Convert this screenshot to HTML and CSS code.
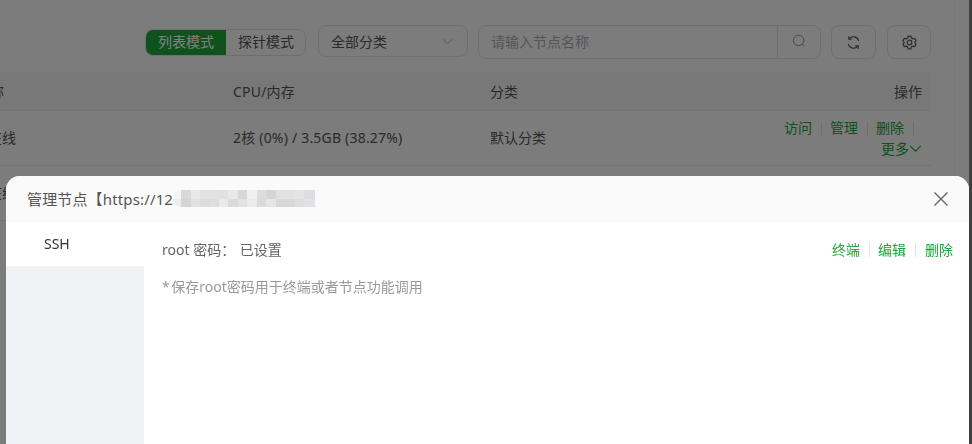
FILE: index.html
```html
<!DOCTYPE html>
<html lang="en">
<head>
  <meta charset="UTF-8" />
  <title>节点管理</title>
  <link rel="stylesheet" href="styles.css">
</head>
<body>
  <!-- Node list behind the mask -->
  <main class="page">
    <div class="toolbar">
      <div class="mode-switch">
        <span class="mode mode-active">列表模式</span>
        <span class="mode">探针模式</span>
      </div>
      <div class="select">
        <span>全部分类</span>
        <svg class="select-arrow" viewBox="0 0 12 12"><path d="M1 3.5 6 8.5 11 3.5" /></svg>
      </div>
      <div class="search">
        <span class="search-input">请输入节点名称</span>
        <span class="search-btn">
          <svg viewBox="0 0 16 16"><circle cx="7.5" cy="7.3" r="6" /><path d="M11.8 11.6 14.4 14.2" /></svg>
        </span>
      </div>
      <span class="icon-btn">
        <svg viewBox="0 0 16 16"><path d="M13.6 6.2A5.8 5.8 0 0 0 3.4 4.2M2.4 9.8a5.8 5.8 0 0 0 10.2 2" /><path d="M3 1.2v3.2h3.2M13 14.8v-3.2H9.8" /></svg>
      </span>
      <span class="icon-btn">
        <svg viewBox="0 0 16 16"><path d="M6.6 1.2h2.8l.6 2 1.6.9 2-.5 1.4 2.4L13.6 8l1.4 2-1.4 2.4-2-.5-1.6.9-.6 2H6.6l-.6-2-1.6-.9-2 .5L1 10l1.4-2L1 6l1.4-2.4 2 .5L6 3.2z" /><circle cx="8" cy="8" r="2.5" /></svg>
      </span>
    </div>
    <div class="table">
      <div class="row row-head">
        <span class="cell-name">名称</span>
        <span class="cell-cpu">CPU/内存</span>
        <span class="cell-cat">分类</span>
        <span class="cell-op">操作</span>
      </div>
      <div class="row row-body">
        <span class="cell-name">在线</span>
        <span class="cell-cpu">2核 (0%) / 3.5GB (38.27%)</span>
        <span class="cell-cat">默认分类</span>
        <div class="cell-op links">
          <div><a>访问</a><i></i><a>管理</a><i></i><a>删除</a><i></i></div>
          <div class="more">更多<svg viewBox="0 0 12 12"><path d="M1 3.5 6 8.5 11 3.5" /></svg></div>
        </div>
      </div>
      <div class="row row-body">
        <span class="cell-name">在线</span>
      </div>
    </div>
  </main>
  <div class="page-edge"></div>

  <div class="mask"></div>

  <!-- Manage node drawer -->
  <section class="drawer">
    <header class="drawer-head">
      <span class="drawer-title">管理节点【https://12</span>
      <span class="mosaic"></span>
      <svg class="close" viewBox="0 0 16 16"><path d="M1.5 1.5 14.5 14.5M14.5 1.5 1.5 14.5" /></svg>
    </header>
    <div class="drawer-body">
      <aside class="tabs">
        <div class="tab">SSH</div>
      </aside>
      <div class="panel">
        <div class="panel-row">
          <span>root 密码： <span class="value">已设置</span></span>
          <div class="actions"><a>终端</a><i></i><a>编辑</a><i></i><a>删除</a></div>
        </div>
        <p class="hint">* 保存root密码用于终端或者节点功能调用</p>
      </div>
    </div>
  </section>
</body>
</html>
```

FILE: styles.css
```css
* {
  margin: 0;
  padding: 0;
  box-sizing: border-box;
}
html, body {
  height: 100%;
}
body {
  font-family: "Noto Sans", "Noto Sans CJK SC", sans-serif;
  font-size: 14px;
  color: #555;
  background-color: #f8f8f8;
  overflow: hidden;
}
svg {
  fill: none;
  stroke: currentColor;
  display: block;
}

/* Page behind the mask */
.page {
  width: 958px;
  height: 100%;
  padding: 25px 26px 0 0;
  border-right: 1px solid #fff;
}
.toolbar {
  display: flex;
  align-items: flex-start;
  justify-content: flex-end;
  height: 34px;
}
.mode-switch {
  display: flex;
  height: 27px;
  margin: 4px 12px 0 0;
  border: 1px solid #dcdfe6;
  border-radius: 8px;
  overflow: hidden;
}
.mode {
  width: 79px;
  padding-left: 1px;
  line-height: 24px;
  text-align: center;
}
.mode-active {
  width: 81px;
  margin: -1px 0 -1px -1px;
  padding-top: 1px;
  background-color: #20a53a;
  color: #fff;
}
.select {
  display: flex;
  align-items: center;
  justify-content: space-between;
  width: 150px;
  height: 32px;
  margin-right: 10px;
  padding: 0 14px 0 12px;
  border: 1px solid #dcdfe6;
  border-radius: 8px;
}
.select-arrow {
  width: 11px;
  height: 11px;
  color: #aaa;
}
.search {
  display: flex;
  width: 343px;
  height: 34px;
  margin-right: 10px;
  border: 1px solid #dcdfe6;
  border-radius: 8px;
}
.search-input {
  flex: 1;
  padding-left: 12px;
  line-height: 32px;
  color: #a8abb2;
}
.search-btn {
  display: flex;
  align-items: center;
  justify-content: center;
  width: 43px;
  padding-bottom: 2px;
  border-left: 1px solid #dcdfe6;
  color: #888;
}
.search-btn svg {
  width: 14px;
  height: 14px;
}
.icon-btn {
  display: flex;
  align-items: center;
  justify-content: center;
  width: 45px;
  height: 34px;
  border: 1px solid #dcdfe6;
  border-radius: 8px;
  stroke-width: 1.2;
}
.icon-btn + .icon-btn {
  width: 44px;
  margin-left: 11px;
}
.icon-btn svg {
  width: 15px;
  height: 15px;
}

/* Table */
.table {
  margin-top: 13px;
}
.row {
  display: flex;
  align-items: center;
  border-bottom: 1px solid #e6e7ea;
}
.row-head {
  height: 39px;
  background-color: #f0f1f2;
}
.row-body {
  height: 55px;
  padding-bottom: 2px;
}
.cell-name {
  width: 233px;
  flex: none;
  padding-right: 217px;
  white-space: nowrap;
  overflow: hidden;
  direction: rtl;
}
.row-head .cell-name {
  padding-right: 229px;
}
.cell-cpu {
  width: 257px;
  flex: none;
  letter-spacing: 0.2px;
}
.cell-cat {
  flex: 1;
}
.cell-op {
  width: 160px;
  padding-right: 9px;
  text-align: right;
}
.links {
  color: #20a53a;
  line-height: 21px;
  margin-top: 2px;
}
.links a {
  color: #20a53a;
}
.links i {
  display: inline-block;
  width: 1px;
  height: 13px;
  margin: 0 8.5px;
  background-color: #ddd;
  vertical-align: -2px;
}
.more {
  display: flex;
  justify-content: flex-end;
  align-items: center;
}
.more svg {
  width: 13px;
  height: 13px;
}

.page-edge {
  position: absolute;
  top: 0;
  right: 0;
  bottom: 0;
  width: 3px;
  background-color: #7e7e7e;
}

/* Mask */
.mask {
  position: fixed;
  inset: 0;
  background-color: rgba(0, 0, 0, 0.5);
}

/* Drawer */
.drawer {
  position: fixed;
  top: 176px;
  left: 6px;
  right: 3px;
  bottom: 0;
  display: flex;
  flex-direction: column;
  border-radius: 14px 14px 0 0;
  background-color: #fff;
  overflow: hidden;
}
.drawer-head {
  display: flex;
  align-items: center;
  height: 46px;
  padding: 0 20px 0 21px;
  background-color: #fafafa;
  font-size: 15px;
  color: #555;
}
.drawer-title {
  margin-top: -1px;
  letter-spacing: 0.15px;
}
.mosaic {
  width: 142px;
  height: 17px;
  margin: 0 auto 1px 0;
  border-radius: 8px 0 0 8px;
  background:
    linear-gradient(90deg, #f5f5f5 0 8px, #d8d8d8 8px 18px, #e8e9ea 18px 27px, #e2e2e2 27px 46px, #e0e1e3 46px 55px, #e8e8e6 55px 65px, #d6d8da 65px 74px, #f0f0ee 74px 84px, #dcdcdc 84px 93px, #d6d6d6 93px 103px, #e2e2e2 103px 122px, #e4e4e4 122px 131px, #dcdde0 131px 142px) top / 100% 9px no-repeat,
    linear-gradient(90deg, #eee 0 8px, #d4d4d4 8px 18px, #e2e2e2 18px 27px, #dcdcdc 27px 37px, #dedede 37px 46px, #eaeaea 46px 55px, #dadad8 55px 65px, #e2e2e2 65px 74px, #e8ecee 74px 84px, #dadada 84px 93px, #e6e6e6 93px 103px, #d8d8d8 103px 122px, #dedede 122px 131px, #e0e2e4 131px 142px) bottom / 100% 8px no-repeat;
}
.close {
  width: 16px;
  height: 16px;
  color: #666;
  stroke-width: 1.4;
}
.drawer-body {
  flex: 1;
  display: flex;
}
.tabs {
  width: 138px;
  background-color: #f0f2f5;
}
.tab {
  height: 44px;
  padding-left: 38px;
  line-height: 44px;
  background-color: #fff;
  color: #333;
}
.panel {
  flex: 1;
  padding: 18px 16px 0 18px;
}
.panel-row {
  display: flex;
  justify-content: space-between;
  line-height: 20px;
  color: #666;
}
.value {
  margin-left: 1px;
}
.actions {
  display: flex;
  align-items: center;
}
.actions a {
  color: #20a53a;
}
.actions i {
  width: 1px;
  height: 14px;
  margin: 0 9px;
  background-color: #e4e4e4;
}
.actions i:first-of-type {
  margin: 0 8.5px;
}
.hint {
  margin-top: 17px;
  line-height: 20px;
  word-spacing: -2px;
  color: #999;
}
```
